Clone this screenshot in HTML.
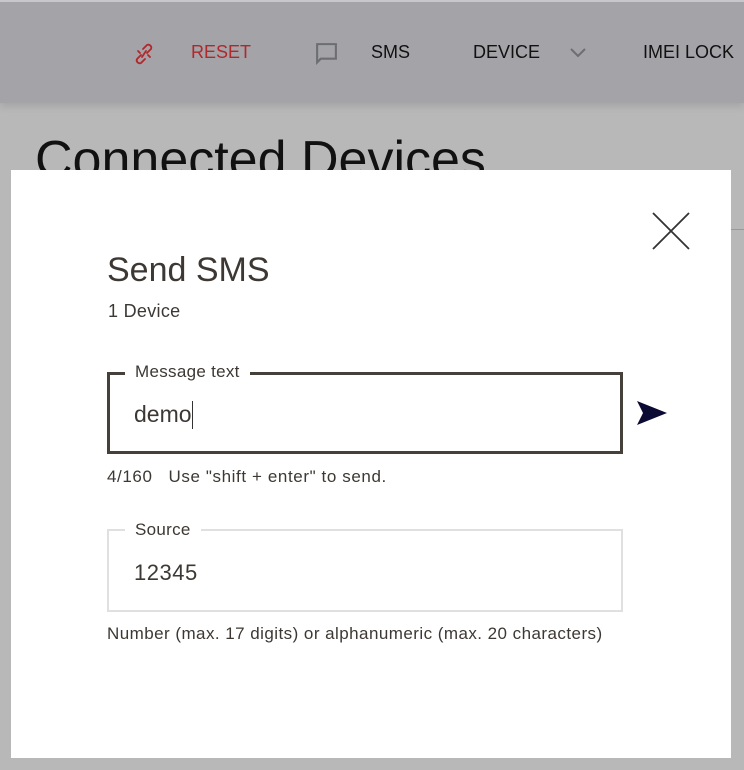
<!DOCTYPE html>
<html><head><style>
*{margin:0;padding:0;box-sizing:border-box}
body{width:744px;height:770px;overflow:hidden;background:#b8b8b8;font-family:"Liberation Sans",sans-serif;position:relative}
.hdr{position:absolute;left:0;top:0;width:744px;height:103px;background:#a4a3a8;border-top:2px solid #c8c8cc;box-shadow:0 3px 8px rgba(0,0,0,.12)}
.t{position:absolute;font-size:18px;white-space:nowrap}
.modal{position:absolute;left:11px;top:170px;width:720px;height:588px;background:#fff}
.ab{position:absolute;white-space:nowrap;color:#3d3833}
</style></head><body>
<div class="hdr">
<svg style="position:absolute;left:132px;top:40px" width="24" height="24" viewBox="0 0 24 24" fill="none" stroke="#b0282c" stroke-width="1.8" stroke-linecap="round"><path d="M9 13l-4 4a3 3 0 0 0 4 4l4-4"/><path d="M15 11l4-4a3 3 0 0 0-4-4l-4 4"/><path d="M8 11l-2-2M16 13l2 2M10 15l4-6"/></svg>
<div class="t" style="left:191px;top:40px;color:#b0282c">RESET</div>
<svg style="position:absolute;left:314px;top:39px" width="25" height="25" viewBox="0 0 24 24"><path d="M2 2h20v16H7l-5 5z M4 4v14l2-2h14V4z" fill="#6d6e71" fill-rule="evenodd"/></svg>
<div class="t" style="left:371px;top:40px;color:#111">SMS</div>
<div class="t" style="left:473px;top:40px;color:#111">DEVICE</div>
<svg style="position:absolute;left:569px;top:45px" width="18" height="12" viewBox="0 0 18 12" fill="none" stroke="#6d6e71" stroke-width="2"><path d="M2 2l7 7 7-7"/></svg>
<div class="t" style="left:643px;top:40px;color:#111">IMEI LOCK</div>
</div>
<div class="t" style="left:35px;top:130px;font-size:52px;color:#111">Connected Devices</div>
<div style="position:absolute;left:731px;top:229px;width:13px;height:1px;background:#999"></div>
<div class="modal">
<svg style="position:absolute;left:641px;top:42px" width="38" height="38" viewBox="0 0 38 38" stroke="#333" stroke-width="1.8"><path d="M1 1l36 36M37 1L1 37"/></svg>
<div class="ab" style="left:96px;top:81px;font-size:34px">Send SMS</div>
<div class="ab" style="left:97px;top:131px;font-size:18px;letter-spacing:0.3px">1 Device</div>
<div style="position:absolute;left:96px;top:202px;width:516px;height:82px;border:3px solid #45403a"></div>
<div class="ab" style="left:114px;top:192px;font-size:17px;background:#fff;padding:0 10px;letter-spacing:0.3px">Message text</div>
<div class="ab" style="left:123px;top:231px;font-size:23px">demo<span style="display:inline-block;width:1px;height:28px;background:#333;vertical-align:-7px"></span></div>
<svg style="position:absolute;left:626px;top:231px" width="30" height="24" viewBox="0 0 30 24"><path d="M0 0L30 12 0 24 6 12z" fill="#0b0a33"/></svg>
<div class="ab" style="left:96px;top:297px;font-size:17px;letter-spacing:0.6px">4/160&nbsp;&nbsp;&nbsp;Use "shift + enter" to send.</div>
<div style="position:absolute;left:96px;top:359px;width:516px;height:83px;border:2px solid #e0e0e0"></div>
<div class="ab" style="left:114px;top:350px;font-size:17px;background:#fff;padding:0 10px;letter-spacing:0.3px">Source</div>
<div class="ab" style="left:123px;top:390px;font-size:22px;letter-spacing:0.5px">12345</div>
<div class="ab" style="left:96px;top:454px;font-size:17px;letter-spacing:0.45px">Number (max. 17 digits) or alphanumeric (max. 20 characters)</div>
</div>
</body></html>
